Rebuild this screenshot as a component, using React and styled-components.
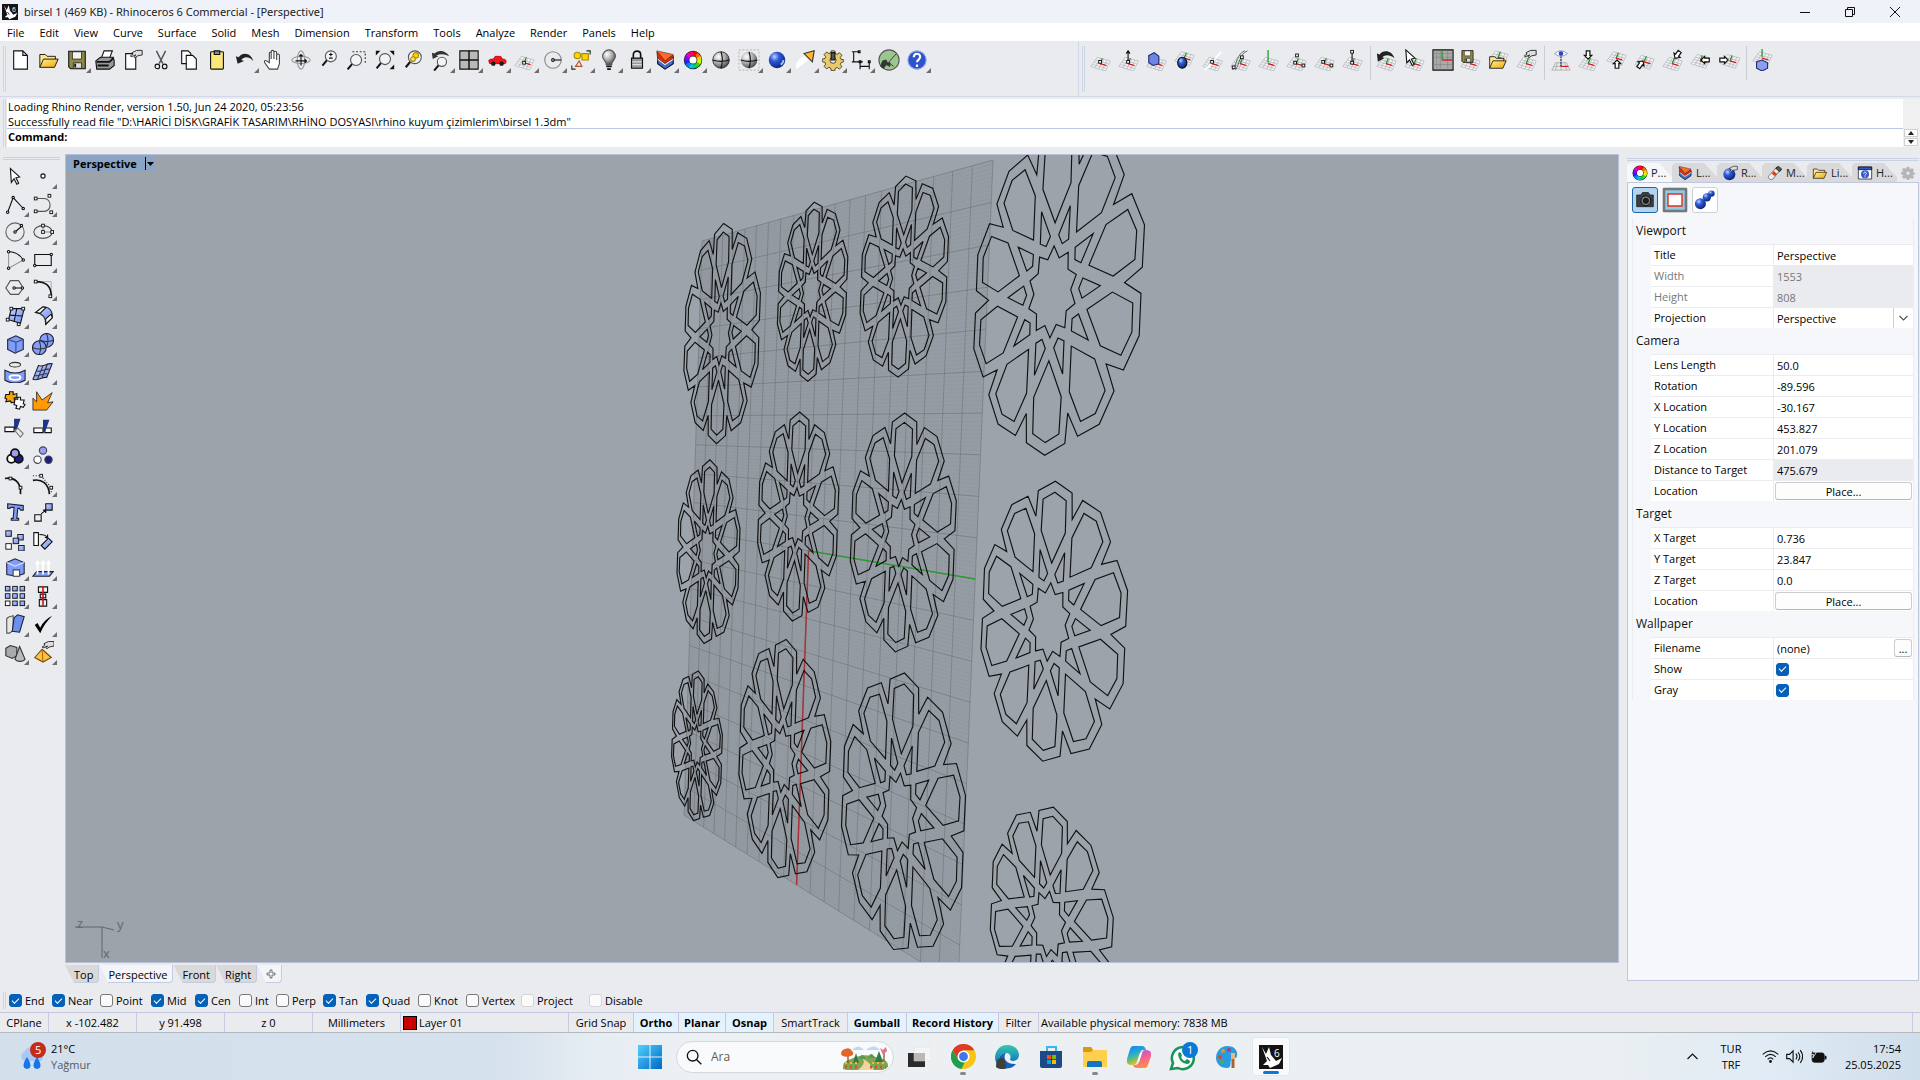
import React from "react";
import styled, { createGlobalStyle, css } from "styled-components";

const Global = createGlobalStyle`
  *, *::before, *::after { box-sizing: border-box; }
  html, body { margin: 0; background: #eaebef; }
  body, button, input, select, textarea {
    font-family: "Open Sans", "Noto Sans", "Liberation Sans", sans-serif;
    font-size: 11px; line-height: 15px; color: #000;
  }
  button { padding: 0; border: 0; background: none; }
`;

/* ---------- shell ---------- */
const Window = styled.div`
  display: flex; flex-direction: column; min-height: 100vh; background: #eaebef;
`;
const TitleBar = styled.header`
  display: flex; align-items: center; gap: 6px; height: 23px; padding: 0 3px 0 2px; background: #eff3f9;
`;
const TitleText = styled.h1`
  margin: 0; flex: 1; font-family: "Noto Sans", "Open Sans", sans-serif; font-size: 11px; font-weight: 400; color: #222;
`;
const WindowControls = styled.div`
  display: flex;
`;
const WindowButton = styled.button`
  width: 45px; height: 22px; display: grid; place-items: center;
`;
const MenuBar = styled.nav`
  display: flex; gap: 15px; height: 18px; padding-left: 7px; background: #fff;
`;
const MenuItem = styled.button`
  line-height: 20px; white-space: nowrap;
`;

/* ---------- toolbars ---------- */
const ToolbarBand = styled.div`
  display: flex; height: 56px; border-bottom: 1px solid #d3d8e6;
`;
const Toolbar = styled.div`
  display: flex; align-items: flex-start; padding: 5px 0 4px 3px;
  flex: ${(p) => (p.$grow ? "1" : "0 0 " + p.$basis)};
  border-right: ${(p) => (p.$grow ? "0" : "1px solid #d3d8e6")};
`;
const Grip = styled.span`
  align-self: stretch; width: 3px; margin-right: ${(p) => p.$space || 0}px;
  border: solid #cdd5e6; border-width: 0 1px;
`;
const ToolButton = styled.button`
  position: relative; flex: none; width: 28px; height: 28px; display: grid; place-items: center;
  svg { display: block; }
  ${(p) => p.$more && css`
    &::after {
      content: ""; position: absolute; right: 0; bottom: 1px;
      border: solid transparent; border-width: 0 0 5px 5px; border-bottom-color: #6d6d70;
    }
  `}
`;
const ToolDivider = styled.span`
  width: 1px; height: 34px; margin: 0 2px 0 3px; background: #c9ccd2;
`;

/* ---------- command area ---------- */
const CommandArea = styled.section`
  display: flex; margin-top: 2px; padding-left: 3px;
`;
const CommandColumn = styled.div`
  flex: 1; background: #fff;
`;
const History = styled.div`
  height: 30px; padding-left: 1px; border-bottom: 1px solid #bcc6e0; line-height: 15px; white-space: pre;
`;
const CommandLine = styled.label`
  display: flex; height: 18px; padding-left: 1px; font-weight: 700; line-height: 16px;
`;
const CommandInput = styled.input`
  flex: 1; border: 0; padding: 0 4px; outline: 0; background: transparent;
`;
const ScrollColumn = styled.div`
  display: flex; flex-direction: column; justify-content: flex-end; width: 17px; background: #f0f0f1;
`;
const Spin = styled.button`
  height: 8px; margin: 0 2px 1px 1px; display: grid; place-items: center;
  background: #fff; border: 1px solid #d0d0d0;
`;

/* ---------- work area ---------- */
const Work = styled.main`
  flex: 1; display: flex; padding: 7px 1px 9px 0;
`;
const SideBar = styled.aside`
  width: 65px; padding: 3px 4px 0 1px;
`;
const SideGrip = styled.div`
  height: 3px; margin: 0 1px 2px 2px; border: solid #c9d2e4; border-width: 1px 0;
`;
const SideGrid = styled.div`
  display: grid; grid-template-columns: 28px 28px;
`;
const ViewColumn = styled.section`
  flex: 1; min-width: 0; display: flex; flex-direction: column;
`;
const Viewport = styled.div`
  position: relative; flex: 1; overflow: hidden; background: #9ca3ab; border: 1px solid #b7c0d8;
  > svg { position: absolute; inset: 0; width: 100%; height: 100%; }
`;
const ViewTitle = styled.button`
  position: absolute; left: 0; top: 0; display: flex; align-items: center; height: 17px; padding-left: 7px;
  background: #8ba5c3; font-weight: 700; font-size: 11px;
`;
const ViewCaret = styled.span`
  display: grid; place-items: center; width: 10px; height: 13px; margin-left: 8px; border-left: 1px solid #000;
`;
const ViewTabs = styled.div`
  display: flex; height: 20px; padding-top: 2px;
`;
const ViewTab = styled.button`
  height: 18px; padding: 0 5px 0 9px; line-height: 20px;
  background: ${(p) => (p.$on ? "#f4f5f9" : "#d9d9da")};
  border: solid #c3cbe0; border-width: 0 1px 1px 0; border-radius: 0 0 4px 0;
  clip-path: polygon(0 0, 100% 0, 100% 100%, 9px 100%);
`;

/* ---------- properties panel ---------- */
const Panel = styled.aside`
  width: 300px; padding: 4px 0 2px 8px; display: flex; flex-direction: column;
`;
const PanelGrip = styled.div`
  height: 3px; border: solid #c9d2e4; border-width: 1px 0;
`;
const PanelTabs = styled.div`
  display: flex; align-items: flex-end; height: 21px;
`;
const PanelTab = styled.button`
  display: flex; align-items: center; gap: 3px; width: 45px; height: 19px; padding-left: 5px;
  background: ${(p) => (p.$on ? "#f6f7fa" : "#d9d9dc")};
  clip-path: polygon(0 3px, 3px 0, 32px 0, 45px 14px, 45px 100%, 0 100%);
  color: #222;
`;
const PanelGear = styled.button`
  flex: 1; height: 19px; display: grid; place-items: center;
`;
const PanelBody = styled.div`
  flex: 1; padding: 4px; background: #f6f7fa; border: 1px solid #c0c8de;
`;
const PageButtons = styled.div`
  display: flex; gap: 4px; height: 31px;
`;
const PageButton = styled.button`
  width: 26px; height: 26px; display: grid; place-items: center; border-radius: 3px;
  border: 1px solid ${(p) => (p.$on ? "#1c66ad" : "#cfd0d4")};
  background: ${(p) => (p.$on ? "#b4d3ee" : "#fff")};
`;
const Group = styled.fieldset`
  margin: 0; padding: 0; border: solid #ececf0; border-width: 0 1px; min-width: 0;
`;
const GroupTitle = styled.h2`
  margin: 0; height: 26px; padding-left: 3px; font-size: 12px; font-weight: 400; line-height: 26px; color: #111;
`;
const Row = styled.div`
  display: grid; grid-template-columns: 122px 1fr; height: 21px; margin-left: 18px; background: #fff;
  border-top: 1px solid #ececf0; color: ${(p) => (p.$off ? "#777" : "#000")};
`;
const RowLabel = styled.label`
  padding-left: 3px; line-height: 20px; white-space: nowrap;
`;
const RowValue = styled.div`
  display: flex; align-items: center; min-width: 0; border-left: 1px solid #ececf0;
  background: ${(p) => (p.$shade ? "#eaebef" : "transparent")};
`;
const ValueInput = styled.input`
  width: 100%; height: 20px; border: 0; padding: 0 3px; outline: 0; background: transparent; color: inherit;
`;
const SelectWrap = styled.div`
  position: relative; flex: 1; height: 20px;
  > svg { position: absolute; right: 5px; top: 7px; pointer-events: none; }
  &::before { content: ""; position: absolute; right: 19px; top: 0; width: 1px; height: 20px; background: #cfcfd3; }
`;
const ValueSelect = styled.select`
  appearance: none; width: 100%; height: 20px; border: 0; padding: 0 3px; background: transparent; outline: 0;
`;
const PushButton = styled.button`
  flex: ${(p) => (p.$small ? "0 0 18px" : "1")}; height: 18px; margin: 0 1px; background: #fdfdfd;
  border: 1px solid #cdcdd1; border-bottom-color: #b5b5ba; border-radius: 3px; line-height: 15px;
`;
const Check = styled.input`
  appearance: none; flex: none; width: 13px; height: 13px; margin: 0 0 0 ${(p) => p.$inset || 0}px; border-radius: 3px;
  border: 1px solid ${(p) => (p.$soft ? "#d4d4d8" : "#77777b")}; background: #fafafb;
  display: grid; place-items: center;
  &:checked { background: #0561b8; border-color: #0561b8; }
  &:checked::after {
    content: ""; width: 7px; height: 4px; margin-top: -2px; border: solid #fff; border-width: 0 0 1px 1px; transform: rotate(-45deg);
  }
`;

/* ---------- bottom bars ---------- */
const SnapBar = styled.div`
  display: flex; align-items: center; height: 20px; padding: 0 0 3px 3px;
`;
const SnapItem = styled.label`
  display: flex; align-items: center; gap: 3px; width: ${(p) => p.$w}px; white-space: nowrap;
`;
const StatusBar = styled.footer`
  display: flex; height: 21px; border-top: 1px solid #c3c8de; border-bottom: 1px solid #b4b9c0; padding-right: 7px;
`;
const StatusCell = styled.button`
  display: flex; align-items: center; justify-content: ${(p) => (p.$left ? "flex-start" : "center")};
  gap: 2px; width: ${(p) => p.$w}px; padding-left: ${(p) => (p.$left ? 2 : 0)}px; white-space: nowrap;
  flex: ${(p) => (p.$fill ? "1" : "none")};
  border-right: 1px solid #c6cae0;
  background: ${(p) => (p.$on ? "#e3f2fc" : "transparent")}; font-weight: ${(p) => (p.$on ? 700 : 400)};
`;
const Swatch = styled.span`
  width: 14px; height: 14px; background: #c80000; border: 1px solid #000;
`;

/* ---------- taskbar ---------- */
const Taskbar = styled.footer`
  display: grid; grid-template-columns: 1fr auto 1fr; align-items: center; height: 47px;
  background: linear-gradient(90deg, #d3e0ec 0, #d5e1ed 26%, #e6edf3 31%, #ecf0f3 36%, #eaeff2 84%, #e0ebf5 92%, #cfdeeb 100%);
`;
const Weather = styled.button`
  justify-self: start; display: flex; align-items: center; gap: 4px; padding-left: 17px; text-align: left; line-height: 16px;
  small { display: block; font-size: 11px; color: #555b63; }
`;
const TaskCenter = styled.div`
  display: flex; align-items: center; height: 47px; padding-right: 2px;
`;
const TaskButton = styled.button`
  position: relative; display: grid; place-items: center; width: 44px; height: 39px;
  &::after {
    content: ""; position: absolute; bottom: 1px; height: 3px; border-radius: 2px;
    width: ${(p) => (p.$state === "active" ? 16 : p.$state === "open" ? 6 : 0)}px;
    background: ${(p) => (p.$state === "active" ? "#0a78d4" : "#85888b")};
  }
  ${(p) => p.$state === "active" && css`
    width: 38px; margin-left: 3px; background: #f8fafc; border-radius: 4px; border: 1px solid #e3e8ec;
  `}
`;
const Search = styled.label`
  display: flex; align-items: center; gap: 9px; width: 218px; height: 32px; padding: 0 4px 0 9px; margin: 0 3px 0 4px;
  background: #f8fafb; border: 1px solid #d3d9de; border-radius: 16px;
  input { flex: 1; min-width: 0; border: 0; background: transparent; outline: 0; padding: 0; font-size: 12px; color: #555; }
  input::placeholder { color: #5a5d60; opacity: 1; }
`;
const Tray = styled.div`
  justify-self: end; display: flex; align-items: center; padding-right: 19px; line-height: 16px;
`;
const TrayItem = styled.button`
  display: flex; align-items: center; justify-content: ${(p) => (p.$end ? "flex-end" : "center")};
  width: ${(p) => p.$w}px; line-height: 16px; text-align: ${(p) => (p.$end ? "right" : "center")};
`;

/* ---------- icons ---------- */
const Svg = ({ s = 24, children, w, h, vb }) => (
  <svg width={w || s} height={h || s} viewBox={vb || "0 0 24 24"} fill="none" stroke="#111" strokeWidth="1.2" aria-hidden="true">
    {children}
  </svg>
);
const Defs = () => (
  <svg width="0" height="0" style={{ display: "block" }} aria-hidden="true">
    <defs>
      <radialGradient id="gBlue" cx=".35" cy=".3" r=".8"><stop offset="0" stopColor="#bcd0ff" /><stop offset=".35" stopColor="#2d5bd8" /><stop offset="1" stopColor="#061a66" /></radialGradient>
      <radialGradient id="gGray" cx=".35" cy=".3" r=".8"><stop offset="0" stopColor="#fff" /><stop offset=".5" stopColor="#aaa" /><stop offset="1" stopColor="#333" /></radialGradient>
      <linearGradient id="gLite" x2="1" y2="1"><stop offset="0" stopColor="#c6d4ff" /><stop offset="1" stopColor="#6c8df2" /></linearGradient>
      <linearGradient id="gFold" x2="1" y2="1"><stop offset="0" stopColor="#ffee9a" /><stop offset="1" stopColor="#f2a900" /></linearGradient>
      <linearGradient id="gWin" x2="1" y2="1"><stop offset="0" stopColor="#4fd0ff" /><stop offset="1" stopColor="#0067c5" /></linearGradient>
      <linearGradient id="gEdge" x2="0" y2="1"><stop offset="0" stopColor="#35c8b0" /><stop offset="1" stopColor="#0c59c0" /></linearGradient>
      <linearGradient id="gCopA" x2=".4" y2="1"><stop offset="0" stopColor="#1a7fe8" /><stop offset=".45" stopColor="#22a8d8" /><stop offset=".75" stopColor="#7cc060" /><stop offset="1" stopColor="#f6c030" /></linearGradient>
      <linearGradient id="gCopB" x2=".3" y2="1"><stop offset="0" stopColor="#a05df0" /><stop offset=".5" stopColor="#f0609a" /><stop offset="1" stopColor="#ff8a4c" /></linearGradient>
    </defs>
  </svg>
);

const HUES = ["#f00", "#f60", "#fc0", "#cf0", "#3d0", "#0c8", "#0cd", "#08f", "#22f", "#80f", "#e0d", "#f06"];
const wheel = (cx, cy, r, w) => (
  <>
    <circle cx={cx} cy={cy} r={r} stroke="#222" strokeWidth={w + 1.6} fill="#fff" />
    {HUES.map((c, i) => {
      const a = (i * Math.PI) / 6 - 1.57;
      const b = a + 0.56;
      return <path key={c} stroke={c} strokeWidth={w} d={`M${cx + r * Math.cos(a)} ${cy + r * Math.sin(a)}A${r} ${r} 0 0 1 ${cx + r * Math.cos(b)} ${cy + r * Math.sin(b)}`} />;
    })}
  </>
);
const lens = (x, y, r = 5) => (
  <>
    <path d={`M${x - r * 0.7} ${y + r * 0.7}l-5 6`} strokeWidth="2.2" />
    <circle cx={x} cy={y} r={r} fill="#f2f4f6" stroke="#555" />
  </>
);
const layersShape = (
  <>
    <path d="M4 9v7l8 6 9-6V9l-9 6z" fill="#3a6fe0" />
    <path d="M4 7v5l8 6 9-6V7l-9 6z" fill="#fff" stroke="#555" strokeWidth=".6" />
    <path d="M3 3l9 9 9-5v3l-9 6-8-6z" fill="#e22b08" strokeWidth=".6" />
    <path d="M3 2l18 4-9 7z" fill="#ff6a2a" strokeWidth=".5" />
  </>
);
const folder = (
  <>
    <path d="M2 20V6h6l2 2h9v3" fill="#ffe68a" strokeWidth="1" />
    <path d="M2 20l4-9h16l-4 9z" fill="url(#gFold)" strokeWidth="1" />
  </>
);
const disk = (
  <>
    <path d="M3 2.500h18v19H5l-2-2z" fill="#8f8a45" />
    <path d="M7 3h10v8H7z" fill="#f4f4ee" strokeWidth=".8" />
    <path d="M8 15h9v6H8z" fill="#ddd" strokeWidth=".8" />
    <path d="M10 16v4" strokeWidth="2" />
  </>
);
const hand2 = <path d="M11 4l5-2.500h6v5l-5 1-3 2-1-1 2-2-5 2-1-1 3-2z" fill="#ddd" strokeWidth=".9" />;
const ball = (x, y, r, f = "url(#gBlue)") => <circle cx={x} cy={y} r={r} fill={f} stroke="none" />;
const sq = (x, y, f = "#fff", s = 3) => <rect key={`${x}-${y}`} x={x - s / 2} y={y - s / 2} width={s} height={s} fill={f} strokeWidth="1" />;
const undo = <path d="M2 8l2 8 7-3-3-1c3-4 8-4 13 1-2-8-11-11-16-4z" fill="#222" stroke="none" />;
const gear = (c, s) => (
  <path d="M10 2h4l.5 3 2 .8 2.500-1.800 2.800 2.800L20 9.300l.8 2 3 .5v2l-3 1-.8 2 1.800 2.500-2.800 2.600-2.500-1.700-2 .8-.5 2.600h-4l-.5-2.800-2-.8L5 21.700l-2.700-2.800L4 16.500l-.8-2-3-.5v-3l3-.6.8-2L2.300 6 5 3.300 7.500 5l2-.8zM12 9a3.300 3.300 0 100 6.600A3.300 3.300 0 0012 9z" fill={c} fillRule="evenodd" stroke={s} strokeWidth=".9" />
);

/* small construction plane shared by the whole CPlane toolbar */
const Plane = ({ x = 0, y = 0, up }) => (
  <g transform={`translate(${x} ${y})`}>
    <path stroke="#a9abb0" strokeWidth=".7" fill="#f3f3f5" d="M8 9l14 4-5 11-16-5zM11.500 10l-6 10M15 11l-5.500 11M18.500 12l-5 11M6 12l14 4M4.500 14.500l14 4M3 17l14.500 4" />
    <path stroke="#17951c" strokeWidth="1.300" d={up ? "M11 15V1" : "M11 16l2.500-6"} />
    <path stroke="#d21414" strokeWidth="1.400" d="M11 16l7 2" />
  </g>
);

const MAIN = [
  ["New", 0, <path d="M4 2h10l5 5v15H4zM14 2v5h5" fill="#fff" />],
  ["Open", 0, folder],
  ["Save", 1, disk],
  ["Print", 0, <><path d="M8 10l3-8h9l-3 8" fill="#fff" /><path d="M2 13l5-4h14l1 4v5l-5 4H3z" fill="#999" /><path d="M3 14h14l4-4M4 18h12" strokeWidth="2" /></>],
  ["Properties", 0, <><path d="M4 5h11v17H4z" fill="#fff" />{hand2}</>],
  ["Cut", 0, <><path d="M7 2l7 14M17 2l-7 14" stroke="#555" strokeWidth="1.600" /><circle cx="8" cy="19" r="2.500" /><circle cx="16" cy="19" r="2.500" /></>],
  ["Copy", 0, <><path d="M4 2h7l3 3v11H4z" fill="#fff" /><path d="M9 7h7l4 4v11H9z" fill="#fff" /></>],
  ["Paste", 0, <><rect x="5" y="3" width="14" height="19" rx="1" fill="#fbe67a" /><path d="M9 2h6v4H9z" fill="#888" /></>],
  ["Undo", 1, undo],
  ["Pan", 0, <path d="M8 22l-5-7c-1-2 0-3 2-2l3 2V5c0-2 2-2 2 0v6-8c0-2 3-2 3 0v8-7c0-2 3-2 3 0v8-5c0-2 3-2 3 0v9l-2 6z" fill="#fff" stroke="#444" />],
  ["Rotate view", 0, <><ellipse cx="12" cy="12" rx="10" ry="4" stroke="#999" /><ellipse cx="12" cy="12" rx="4" ry="10" stroke="#999" /><path d="M12 6v12M6 13h12M10 8l2-2 2 2M16 11l2 2-2 2" strokeWidth="1.200" /></>],
  ["Zoom dynamic", 0, <>{lens(14, 8, 6)}<path d="M12 6h4M14 4v4M12 10h4" /></>],
  ["Zoom window", 0, <><path d="M7 3h14v13" stroke="#333" strokeDasharray="2 2" />{lens(11, 12, 6)}</>],
  ["Zoom extents", 0, <>{lens(12, 11, 6)}<path d="M2 2h5l-5 5zM22 2h-5l5 5zM22 22h-5l5-5z" fill="#111" stroke="none" /></>],
  ["Zoom selected", 0, <>{lens(14, 9, 7)}<circle cx="15" cy="7" r="3" fill="#ffd500" stroke="#a80" /><circle cx="12" cy="11" r="2.500" fill="#ffe95c" stroke="#a80" /></>],
  ["Undo view", 1, <>{lens(13, 14, 5)}<path d="M2 4l1 7 6-3-2-1c4-2 9-2 14 1C18 2 9 0 5 5z" fill="#333" stroke="none" /></>],
  ["4 View", 1, <><path d="M2 2h20v20H2z" fill="#b9b9b9" /><path d="M12 2v20M2 12h20" strokeWidth="1.600" /></>],
  ["Car", 1, <><path d="M3 13c0-2 3-2 5-2l2-3h6l2 3c3 0 4 1 4 3l-1 2H4z" fill="#f01818" stroke="#a00" strokeWidth=".8" /><circle cx="8" cy="16" r="1.800" fill="#222" /><circle cx="17" cy="16" r="1.800" fill="#222" /></>],
  ["Set CPlane", 1, <><Plane y={-1} />{sq(11, 15)}</>],
  ["Circle", 1, <><circle cx="12" cy="12" r="9" stroke="#888" /><path d="M12 12h9" /><circle cx="12" cy="12" r="1.500" fill="#fff" /></>],
  ["Object snap", 1, <><circle cx="8" cy="7" r="3.500" fill="#ffd500" stroke="#a80" /><path d="M13 5h7v7h-7z" fill="#ffd500" stroke="#a80" /><path d="M6 19l4-6 3 6z" stroke="#b5552d" /><path d="M18 2h4v4M2 18v4h4" stroke="#222" /></>],
  ["Light", 1, <><path d="M9 17c0-4-4-5-4-9a7 7 0 0114 0c0 4-4 5-4 9z" fill="url(#gGray)" stroke="#555" /><path d="M9 19h6M10 22h4" strokeWidth="2" /></>],
  ["Lock", 1, <><path d="M8 11V6c0-5 8-5 8 0v5" strokeWidth="1.800" /><path d="M6 10h12v11H6z" fill="#999" /><path d="M7 14h10M7 17h10" stroke="#ddd" /></>],
  ["Layers", 1, layersShape],
  ["Materials", 1, wheel(12, 12, 7, 4.5)],
  ["Shade", 0, <>{ball(12, 12, 9, "url(#gGray)")}<circle cx="12" cy="12" r="9" strokeWidth=".8" /><path d="M3 12c6 2 12 2 18 0M12 3c2 6 2 12 0 18" /></>],
  ["Render", 1, <><path d="M1 1h22v22H1z" stroke="#bbb" strokeDasharray="2 2" />{ball(12, 12, 9, "url(#gGray)")}<path d="M3 12c6 2 12 2 18 0M12 3c2 6 2 12 0 18" /></>],
  ["Render ball", 1, <>{ball(12, 12, 9)}<path d="M16 17c2-1 3-3 3-5" stroke="#9fc3ff" strokeWidth="2" /></>],
  ["Spotlight", 1, <><path d="M2 22c0-8 4-12 10-14l4 4z" fill="#fff" stroke="none" /><path d="M11 5l11-3-2 12z" fill="#ffb52e" stroke="#333" /></>],
  ["Options", 1, <>{gear("#e9c96b", "#3a3010")}<path d="M10 4h4v8h-4z" fill="#555" /></>],
  ["Dimension", 1, <path d="M2 3h8M2 14h8M4 3v11M10 14h4M11 22v-8M21 22v-8M11 19h10M9 2h2v2H9zM10 13h2v2h-2zM20 13h2v2h-2z" />],
  ["Grasshopper", 0, <><circle cx="12" cy="12" r="11" fill="#9cc690" stroke="#555" /><path d="M3 19l2-6 4-1 1 3 3 0 0 4-4-2-3 4zM12 14l8-9M12 15l5 4" fill="#333" stroke="#333" strokeWidth="1" /></>],
  ["Help", 1, <><circle cx="12" cy="12" r="10" fill="#2d52cc" stroke="#8ea6ea" /><path d="M8.500 9c0-5 7-5 7-.5 0 3-3.500 3-3.500 6M12 17v2.500" stroke="#fff" strokeWidth="2.400" /></>],
];

const arrow = (x, y, r) => <path transform={`translate(${x} ${y}) rotate(${r})`} d="M0 5l-4-4h2v-5h4v5h2z" fill="#fff" strokeWidth="1.300" />;
const CPLANE = [
  ["CPlane origin", <><Plane />{sq(11, 14)}</>],
  ["CPlane elevation", <><Plane /><path d="M11 14V3M9 5l2-3 2 3" />{sq(11, 14)}</>],
  ["CPlane to object", <><Plane /><path d="M3 7l6-3 5 4v8l-6 2-5-3z" fill="#6c86e6" stroke="#222b66" /></>],
  ["CPlane to surface", <><Plane y={-6} /><ellipse cx="9" cy="15" rx="5" ry="6" fill="url(#gBlue)" /></>],
  ["CPlane perpendicular", <><Plane /><path d="M3 23c5-4 9-10 18-20" stroke="#fff" strokeWidth="2" />{sq(11, 14)}</>],
  ["CPlane to curve", <><Plane /><path d="M3 23c4-6 5-18 13-21M6 23c4-6 5-18 13-21" stroke="#333" strokeWidth=".8" />{sq(13, 9)}{sq(4, 20)}</>],
  ["CPlane rotate", <Plane up />],
  ["CPlane 3 points", <><Plane />{sq(12, 7)}{sq(10, 15)}{sq(19, 18)}</>],
  ["CPlane X", <><Plane />{sq(10, 14)}{sq(19, 18)}</>],
  ["CPlane Z", <><Plane /><path d="M11 15V3" />{sq(11, 3)}{sq(11, 15)}</>],
  null,
  ["Previous CPlane", <><Plane /><path d="M1 5l1 9 7-4-2-1c3-3 8-3 13 1C18 2 8 0 4 6z" fill="#222" stroke="none" /></>],
  ["Select CPlane", <><Plane /><path d="M2 1l1 14 3-3 3 6 2-1-3-6 4-1z" fill="#fff" /></>],
  ["CPlane top", <><path d="M1 1h22v22H1z" fill="#aaa" /><path d="M1 5h22M1 9h22M1 17h22M5 1v22M9 1v22M17 1v22" stroke="#777" strokeWidth=".5" /><path d="M11 1v11" stroke="#17951c" /><path d="M11 12h11" stroke="#d21414" strokeWidth="1.400" /></>],
  ["Save CPlane", <><Plane /><g transform="scale(.68)">{disk}</g></>],
  ["Read CPlane", <><Plane y={-7} /><g transform="translate(0 3) scale(.9)">{folder}</g></>],
  ["Edit CPlane", <><Plane />{hand2}</>],
  null,
  ["View CPlane", <><path d="M6 15h12l4 8H2zM4 19h16M12 15v8M8 15l-2 8M16 15l2 8" stroke="#999" strokeWidth=".7" /><path d="M12 8v11" strokeDasharray="2 1" /><path d="M5 5q7-6 14 0-7 6-14 0z" fill="#fff" stroke="#6a78b0" strokeWidth=".8" /><circle cx="12" cy="5" r="2.500" fill="#2946c8" stroke="none" /><path d="M12 19h8" stroke="#d21414" /></>],
  ["World top", <><Plane />{arrow(11, 6, 0)}</>],
  ["World bottom", <><Plane y={-6} />{arrow(12, 17, 180)}</>],
  ["World left", <><Plane y={-2} />{arrow(7, 17, 215)}</>],
  ["World right", <><Plane />{arrow(17, 6, 35)}</>],
  ["World front", <><Plane y={-3} />{arrow(17, 12, 90)}</>],
  ["World back", <><Plane x={2} y={-3} />{arrow(6, 12, 270)}</>],
  null,
  ["Named CPlane", <><Plane y={-6} up /><path d="M5 14l6-2 6 3v6l-6 3-6-3z" fill="#8a9df0" stroke="#222b66" /></>],
];

const dot = (x, y) => <circle key={`${x}.${y}`} cx={x} cy={y} r="1.300" fill="#fff" />;
const L = "url(#gLite)";
const SIDE = [
  ["Select", 0, <path d="M7 4l1 15 3-4 3 6 2-1-3-6 4-1z" fill="#fff" />],
  ["Point", 1, <circle cx="12" cy="12" r="2.300" fill="#fff" />],
  ["Polyline", 1, <><path d="M4 21L10 5l12 13" />{dot(4, 21)}{dot(10, 5)}{dot(21, 17)}</>],
  ["Curve", 1, <><path d="M4 6h9c9 0 9 14 0 14H4" stroke="#555" />{sq(4, 6)}{sq(4, 20)}{sq(19, 3)}{sq(21, 21)}</>],
  ["Circle", 1, <><circle cx="12" cy="12" r="10" stroke="#666" /><path d="M12 12l7-6" />{dot(12, 12)}{dot(19, 5)}</>],
  ["Ellipse", 1, <><ellipse cx="12" cy="12" rx="10" ry="7" stroke="#555" /><path d="M12 12V5M12 12h10" stroke="#888" />{sq(12, 12)}{sq(12, 5)}{sq(22, 12)}</>],
  ["Arc", 1, <><path d="M5 21V3" stroke="#999" /><path d="M5 21l16-9" stroke="#999" /><path d="M5 3c8 0 13 4 16 9" />{dot(5, 3)}{dot(5, 21)}{dot(21, 12)}</>],
  ["Rectangle", 1, <><path d="M3 6h18v12H3z" />{dot(3, 18)}{dot(21, 6)}</>],
  ["Polygon", 1, <><path d="M7 4h9l5 8-5 7H7l-5-7z" stroke="#555" /><path d="M11 12h9" />{dot(11, 12)}{dot(20, 12)}</>],
  ["Fillet", 1, <><path d="M4 5h17v16" stroke="#999" strokeWidth=".8" /><path d="M4 5c11 0 17 4 17 16" strokeWidth="1.800" />{sq(4, 5)}{sq(20, 21)}</>],
  ["Surface", 1, <><path d="M8 4h14l-4 16-13-4z" fill={L} /><path d="M14 4l-3 14M6 11l14 1" />{sq(8, 4)}{sq(21, 4)}{sq(4, 16)}{sq(16, 21)}</>],
  ["Revolve", 1, <><path d="M4 8l8-6c8 0 11 6 10 12l-7 7c0-7-4-12-11-13z" fill={L} stroke="#333" /><path d="M4 8l8-6 3 1-6 6zM15 21l7-7-1-4-6 5z" fill="#fff" /></>],
  ["Box", 1, <><path d="M4 7l9-4 8 4v11l-9 4-8-4z" fill="#7f9cf8" stroke="#223" /><path d="M4 7l9 3v12M13 10l8-3" stroke="#334a9c" /></>],
  ["Sphere", 1, <><circle cx="16" cy="8" r="7.500" fill="#84a0f6" stroke="#223" /><path d="M9 8c5 2 9 2 14 0M16 1c2 5 2 9 0 14" stroke="#334" /><circle cx="8" cy="16" r="7.500" fill="#84a0f6" stroke="#223" /><path d="M1 16c5 2 9 2 14 0M8 9c2 5 2 9 0 14" stroke="#334" /></>],
  ["Project curve", 1, <><ellipse cx="12" cy="4" rx="6" ry="2.500" stroke="#333" /><path d="M1 10c7 4 15 4 22 0v11c-7 4-15 4-22 0z" fill="#7f9cf8" stroke="#223" /><ellipse cx="12" cy="18" rx="6" ry="2.500" stroke="#fff" strokeWidth="2" /></>],
  ["Mesh", 1, <><path d="M7 5c5 2 9-3 15-2l-6 15c-5-1-9 4-15 2z" fill={L} stroke="#223" /><path d="M5 11c5 1 9-3 14-2M3 16c5 1 9-3 14-2M12 5L6 20M17 3l-6 15" stroke="#334" /></>],
  ["Join", 0, <><path d="M2 6l4 0 0-3 4 0 0 3 4-1 0 4-3 1 1 4-4 1-1-2-5 1 1-3-2-1z" fill="#f8a400" /><path d="M12 11l3 0 0-2 3 0 0 3 4 0-1 4 2 1-2 3-3-1-1 3-4-1 1-3-3-1z" fill="#fff" /></>],
  ["Explode", 0, <path d="M1 23V10l4 4V3l6 9 11-8-5 11 6-1-7 9z" fill="#ff9a00" strokeWidth=".8" />],
  ["Trim", 0, <><path d="M11 2h7l-4 12h-3z" fill="#1d3588" stroke="none" /><path d="M1 11h10v5H1z" fill="#fff" /><path d="M12 15l3-3 6 6-3 4z" stroke="#777" /></>],
  ["Split", 0, <><path d="M2 12h10v5H2zM14 12h7v5h-7z" fill="#fff" /><path d="M12 3h7l-5 14h-2z" fill="#1d3588" stroke="none" /></>],
  ["Group", 1, <><circle cx="8" cy="15" r="4.500" fill="#fff" strokeWidth="2" /><circle cx="16" cy="15" r="4.500" fill="#1d1d80" strokeWidth="2" /><circle cx="12" cy="9" r="4.500" fill="#9d9df0" strokeWidth="2" /></>],
  ["Ungroup", 0, <><circle cx="12" cy="6" r="4" fill="#9d9df0" stroke="#445" /><circle cx="6" cy="16" r="4" fill="#fff" stroke="#445" /><circle cx="18" cy="16" r="4" fill="#1d1d80" stroke="#445" /></>],
  ["Edit points", 0, <><path d="M1 6c10-2 18 4 17 17" strokeWidth="1.800" />{sq(7, 6)}{sq(18, 16)}</>],
  ["Control points", 1, <><path d="M1 8c10-2 17 4 18 15" strokeWidth="1.800" /><path d="M1 3h9l11 13v7" strokeDasharray="1 2" />{sq(10, 3)}{sq(21, 16)}</>],
  ["Text", 1, <path d="M4 3l17 2v5h-3l-1-2h-2l-1 11h2v2H8v-2h2l1-12H8L6 8H4z" fill="#7f9cf8" stroke="#223" />],
  ["Move", 1, <><path d="M3 15h7v7H3z" fill="#eee" /><path d="M15 3h7v7h-7z" fill={L} /><path d="M10 14l5-4M12 10h3v3" /></>],
  ["Copy objects", 0, <>{[[5, 5], [18, 9], [13, 13], [19, 21]].map(([x, y]) => sq(x, y, L, 6))}{sq(5, 19, "#fff", 6)}</>],
  ["Rotate", 0, <><path d="M2 4h5v14H2z" fill="#fff" /><path d="M8 6c5 0 8 1 9 4M14 9l3 1V6" /><path d="M10 18l8-8 4 4-8 8z" fill={L} /></>],
  ["Boolean", 1, <><path d="M3 6l9-4 10 4v12l-8 3-11-2z" fill="#7f9cf8" stroke="#223" /><path d="M3 6l9 4 10-4" stroke="#dfe6ff" /><path d="M10 14h7v7h-7z" fill="#fff" stroke="#445" /></>],
  ["Extrude", 1, <><path d="M5 16h18l-4 5H1z" fill="#7f9cf8" stroke="#223" /><path d="M6 19V5M12 19V5M18 19V5M4 8l2-3 2 3M10 8l2-3 2 3M16 8l2-3 2 3" stroke="#fff" strokeWidth="2" /></>],
  ["Array", 1, <>{[4, 12, 20].map((x) => [4, 12, 20].map((y) => sq(x, y, x === 4 && y === 20 ? "#fff" : L, 5)))}</>],
  ["Align", 1, <><path d="M7 2h10v6H7zM9 10h6v4H9zM8 16h8v7H8z" fill="#eee" /><path d="M12 1v22" stroke="#d01818" strokeWidth="1.800" /></>],
  ["Bend", 1, <><path d="M3 6c3-3 5-2 7-3v16l-4 3H3z" fill="#e6e6e6" stroke="#555" /><path d="M11 5l4-3 7 2-5 17-8-1z" fill="#6d8ff0" stroke="#223" /></>],
  ["Check", 1, <path d="M3 13l3-2 3 5C12 10 16 6 22 3 16 9 12 15 9 22z" fill="#000" stroke="none" />],
  ["Solids", 1, <><path d="M2 8l5-3 7 2v9l-5 3-7-3z" fill="#aaa" stroke="#333" /><path d="M17 6l6 14c-3 3-8 3-11 0z" fill="#bbb" stroke="#333" /></>],
  ["Pyramid", 1, <><path d="M11 9l10 9-9 5-9-5z" fill="#ffc04a" stroke="#744a00" /><path d="M11 9l1 14" stroke="#a86c00" /><g transform="translate(2 -1)">{hand2}</g></>],
];

const RhinoLogo = ({ s }) => (
  <Svg s={s}>
    <path d="M0 0h24v24H0z" fill="#141414" stroke="none" />
    <path d="M3 2l4 7 3-7 2 8 5 6 6-3-3 6-9 4-2-3-5 0 4-4z" fill="#fff" stroke="none" />
    <path d="M3 15l3 2M8 12l3 4" stroke="#141414" />
    <text x="15" y="12" fontSize="10" fill="#fff" stroke="none">6</text>
  </Svg>
);

/* ---------- perspective scene ---------- */
const QUAD = [[702, 241], [993, 160], [958, 985], [684, 815]];

function squareToQuad([[x0, y0], [x1, y1], [x2, y2], [x3, y3]]) {
  const dx1 = x1 - x2, dx2 = x3 - x2, sx = x0 - x1 + x2 - x3;
  const dy1 = y1 - y2, dy2 = y3 - y2, sy = y0 - y1 + y2 - y3;
  const det = dx1 * dy2 - dx2 * dy1;
  const g = (sx * dy2 - dx2 * sy) / det;
  const h = (dx1 * sy - sx * dy1) / det;
  return [x1 - x0 + g * x1, x3 - x0 + h * x3, x0, y1 - y0 + g * y1, y3 - y0 + h * y3, y0, g, h, 1];
}
function invert([a, b, c, d, e, f, g, h, i]) {
  return [e * i - f * h, c * h - b * i, b * f - c * e, f * g - d * i, a * i - c * g, c * d - a * f, d * h - e * g, b * g - a * h, a * e - b * d];
}
const apply = (m, x, y) => {
  const w = m[6] * x + m[7] * y + m[8];
  return [(m[0] * x + m[1] * y + m[2]) / w, (m[3] * x + m[4] * y + m[5]) / w];
};
const TO_SCREEN = squareToQuad(QUAD);
const TO_PLANE = invert(TO_SCREEN);

/* each medallion: star centre on screen, then its top and bottom tips */
const MEDALLIONS = [
  [720, 334, 723, 224, 716, 444],
  [811, 292, 814, 202, 808, 381],
  [902, 277, 906, 176, 898, 377],
  [1052, 292, 1061, 127, 1045, 456],
  [707, 552, 710, 460, 705, 644],
  [796, 517, 799, 414, 793, 623],
  [900, 533, 905, 413, 896, 652],
  [1049, 622, 1055, 482, 1043, 762],
  [696, 746, 698, 670, 694, 820],
  [782, 759, 785, 639, 777, 877],
  [899, 812, 903, 675, 892, 951],
  [1048, 924, 1053, 808, 1043, 1041],
];

const polar = (r, deg) => {
  const a = (deg * Math.PI) / 180;
  return [r * Math.sin(a), r * Math.cos(a)];
};
const SHAPES = (() => {
  const outline = [], star = [], closed = [];
  for (let k = 0; k < 10; k++) {
    const a = k * 36;
    outline.push(polar(0.952, a - 13.6), polar(1, a), polar(0.952, a + 13.6), polar(0.78, a + 18));
    star.push(polar(0.28, a), polar(0.212, a + 18));
    closed.push([polar(0.922, a), polar(0.881, a + 10), polar(0.662, a + 14), polar(0.42, a), polar(0.662, a - 14), polar(0.881, a - 10)]);
    closed.push([polar(0.3, a + 18), polar(0.346, a + 28), polar(0.531, a + 18), polar(0.346, a + 8)]);
  }
  return [outline, star, ...closed];
})();

const fx = (n) => n.toFixed(1);
const toPath = (pts) => "M" + pts.map((p) => p.map(fx).join(" ")).join("L") + "Z";

function medallionPath([cx, cy, tx, ty, bx, by]) {
  const [u, v] = apply(TO_PLANE, cx, cy);
  const t = apply(TO_PLANE, tx, ty);
  const b = apply(TO_PLANE, bx, by);
  const r = Math.hypot(b[0] - t[0], b[1] - t[1]) / 2;
  return SHAPES.map((s) => toPath(s.map(([x, y]) => apply(TO_SCREEN, u + x * r, v + y * r)))).join("");
}
const seg = (x0, y0, x1, y1) =>
  "M" + apply(TO_SCREEN, x0, y0).map(fx).join(" ") + "L" + apply(TO_SCREEN, x1, y1).map(fx).join(" ");
const gridPath = (n) =>
  Array.from({ length: n + 1 }, (_, i) => seg(i / n, 0, i / n, 1) + seg(0, i / n, 1, i / n)).join("");

const Scene = () => (
  <svg viewBox="66 155 1552 807" preserveAspectRatio="xMidYMid slice" fill="none" role="img" aria-label="Perspective view">
    <path d={toPath(QUAD)} fill="#555c66" fillOpacity=".06" />
    <path d={gridPath(200)} stroke="#5e656e" strokeOpacity=".1" strokeWidth=".6" />
    <path d={gridPath(20)} stroke="#5a5d62" strokeOpacity=".36" strokeWidth="1" />
    <path d={seg(0.5, 0.5, 1, 0.5)} stroke="#2f9a35" strokeWidth="1.500" />
    <path d={seg(0.5, 0.5, 0.5, 1)} stroke="#a83238" strokeWidth="1.500" />
    <g stroke="#111" strokeWidth="1.150">
      {MEDALLIONS.map((m, i) => <path key={i} d={medallionPath(m)} />)}
    </g>
    <path d="M75 927h27l12 3M102 927v31" stroke="#63676d" />
    <g fill="#63676d" fontSize="13">
      <text x="77" y="928">z</text><text x="117" y="929">y</text><text x="103" y="958">x</text>
    </g>
  </svg>
);

/* ---------- data ---------- */
const MENUS = ["File", "Edit", "View", "Curve", "Surface", "Solid", "Mesh", "Dimension", "Transform", "Tools", "Analyze", "Render", "Panels", "Help"];
const GROUPS = [
  ["Viewport", [["Title", "Perspective"], ["Width", "1553", "off"], ["Height", "808", "off"], ["Projection", "Perspective", "select"]]],
  ["Camera", [["Lens Length", "50.0"], ["Rotation", "-89.596"], ["X Location", "-30.167"], ["Y Location", "453.827"], ["Z Location", "201.079"], ["Distance to Target", "475.679", "shade"], ["Location", "Place...", "button"]]],
  ["Target", [["X Target", "0.736"], ["Y Target", "23.847"], ["Z Target", "0.0"], ["Location", "Place...", "button"]]],
  ["Wallpaper", [["Filename", "(none)", "file"], ["Show", "", "check"], ["Gray", "", "check"]]],
];
const PANEL_TABS = [
  ["P...", wheel(12, 12, 8, 5)],
  ["L...", layersShape],
  ["R...", <>{ball(11, 14, 9)}<path d="M11 5l6-3h6v5l-7 1-3 3-1-1 2-3z" fill="#ddd" strokeWidth=".9" /></>],
  ["M...", <><path d="M3 16L15 3l5 4L9 21c-4 3-9-2-6-5z" fill="#eee" stroke="#666" /><path d="M13 5l6 5 3-4-5-4z" fill="#555" /><path d="M10 9l5 4-3 4-5-4z" fill="#e0401a" stroke="none" /></>],
  ["Li...", folder],
  ["H...", <><path d="M2 3h20v18H2z" fill="#fff" stroke="#224" /><path d="M2 3h20v4H2z" fill="#2f55c8" /><circle cx="12" cy="14" r="6" fill="#3458cc" stroke="none" /><path d="M10 13c0-3 4-3 4 0 0 1-2 1-2 3M12 17v1.500" stroke="#fff" strokeWidth="1.500" /></>],
];
const SNAPS = [["End", 1, 43], ["Near", 1, 48], ["Point", 0, 51], ["Mid", 1, 44], ["Cen", 1, 44], ["Int", 0, 37], ["Perp", 0, 47], ["Tan", 1, 43], ["Quad", 1, 52], ["Knot", 0, 48], ["Vertex", 0, 55], ["Project", 0, 68, 1], ["Disable", 0, 60, 1]];
const STATUS = [["CPlane", 49], ["x -102.482", 88], ["y 91.498", 88], ["z 0", 88], ["Millimeters", 88], ["Layer 01", 168, "layer"], ["Grid Snap", 65], ["Ortho", 45, "on"], ["Planar", 47, "on"], ["Osnap", 48, "on"], ["SmartTrack", 74], ["Gumball", 59, "on"], ["Record History", 92, "on"], ["Filter", 40]];

const Value = ({ id, kind, value }) => {
  if (kind === "select")
    return (
      <SelectWrap>
        <ValueSelect id={id} defaultValue={value}><option>{value}</option></ValueSelect>
        <Svg w={9} h={6} vb="0 0 9 6"><path d="M.5 1l4 4 4-4" stroke="#555" /></Svg>
      </SelectWrap>
    );
  if (kind === "button") return <PushButton id={id}>{value}</PushButton>;
  if (kind === "check") return <Check id={id} type="checkbox" defaultChecked $inset={2} />;
  if (kind === "file") return <><ValueInput id={id} defaultValue={value} /><PushButton $small aria-label="Browse">...</PushButton></>;
  return <ValueInput id={id} defaultValue={value} disabled={kind === "off"} readOnly={kind === "shade"} />;
};

const TASKS = [
  ["Task view", "", <Svg s={24}><path d="M1 8h17v14H1z" fill="#2b2b2b" stroke="none" /><path d="M7 2h17v14H7z" fill="#f4f4f4" stroke="#ddd" strokeWidth=".5" /><path d="M7 8h11v8H7z" fill="#b9b9b9" stroke="none" /></Svg>],
  ["Chrome", "open", <Svg s={25}><circle cx="12" cy="12" r="12" fill="#f7c518" stroke="none" /><path d="M1.600 6A12 12 0 0122.400 6H12l-5 9z" fill="#dd3a2c" stroke="none" /><path d="M1.600 6l5.400 9 6 3-3 6A12 12 0 011.600 6z" fill="#1f9d50" stroke="none" /><circle cx="12" cy="12" r="5" fill="#3a78e8" stroke="#fff" strokeWidth="1.500" /></Svg>],
  ["Edge", "", <Svg s={24}><path d="M0 12C1 4 6 0 12 0c8 0 12 5 12 10 0 4-3 6-6 6-2 0-3-1-3-2 1-1 1-6-4-6-4 0-7 3-7 7 0 5 5 9 10 9C6 25 0 20 0 12z" fill="url(#gEdge)" stroke="none" /><path d="M4 15c0-5 4-7 7-7-3 3-2 12 10 11-5 7-17 5-17-4z" fill="#1461b8" stroke="none" /><path d="M1 22c0-4 1-9 5-9s5 5 5 10c-3 2-8 1-10-1z" fill="#3f403c" stroke="none" /></Svg>],
  ["Store", "", <Svg s={24}><path d="M1 6h22v15q0 2-2 2H3q-2 0-2-2z" fill="#1b4a86" stroke="none" /><path d="M8 6V2h9v4" stroke="#38b8ee" strokeWidth="2" /><path d="M8 10h4v4H8z" fill="#f25022" stroke="none" /><path d="M13 10h4v4h-4z" fill="#7fba00" stroke="none" /><path d="M8 15h4v4H8z" fill="#00a4ef" stroke="none" /><path d="M13 15h4v4h-4z" fill="#ffb900" stroke="none" /></Svg>],
  ["Explorer", "open", <Svg s={24}><path d="M0 2h8l2 3h14v17H0z" fill="#ffd050" stroke="none" /><path d="M0 2h8l2 3-2 2H0z" fill="#d99a06" stroke="none" /><path d="M4 22v-4q0-2 2-2h11q2 0 2 2v4z" fill="#1274c4" stroke="none" /></Svg>],
  ["Copilot", "", <Svg s={24}><path d="M6 1h9q3 0 4 4h-3q-2 0-3 3l-3 9q-1 3-4 3H4q-5 0-4-6l3-10q1-3 3-3z" fill="url(#gCopA)" stroke="none" /><path d="M18 5h1q6 0 5 6l-3 9q-1 3-4 3H10q-3 0-4-3h2q3 0 4-3l3-9q1-3 3-3z" fill="url(#gCopB)" stroke="none" /><path d="M13 8h2l-3 9h-2z" fill="#f4f7f9" stroke="none" /></Svg>],
  ["WhatsApp", "", <Svg w={30} h={30} vb="0 0 30 30"><path d="M3 27l2-6a11 11 0 115 5z" fill="#f6fbf8" stroke="#19935a" strokeWidth="2.500" /><path d="M10 12q1-3 3-1l1 3-1 1q1 3 4 4l2-2 3 2q0 3-3 3-8-1-9-10z" fill="#19935a" stroke="none" /><circle cx="22" cy="8" r="8" fill="#0a78d4" stroke="none" /><text x="19" y="12" fontSize="11" fill="#fff" stroke="none">1</text></Svg>],
  ["Paint", "", <Svg s={24}><path d="M12 1c8 0 11 5 10 10-1 4-5 2-6 4s1 8-4 8C5 23 1 18 1 13 1 6 6 1 12 1z" fill="#2b9be0" stroke="none" /><circle cx="5" cy="12" r="2" fill="#e0452c" stroke="none" /><circle cx="8" cy="6" r="2" fill="#c9a227" stroke="none" /><circle cx="14" cy="5" r="2" fill="#b43a80" stroke="none" /><circle cx="7" cy="17" r="2" fill="#4caf50" stroke="none" /><path d="M18 14v9" stroke="#a8632c" strokeWidth="3" /><path d="M18 8v6" stroke="#e8b878" strokeWidth="4" /></Svg>],
  ["Rhinoceros", "active", <RhinoLogo s={24} />],
];

export default function App() {
  return (
    <Window>
      <Global />
      <Defs />
      <TitleBar>
        <RhinoLogo s={16} />
        <TitleText>birsel 1 (469 KB) - Rhinoceros 6 Commercial - [Perspective]</TitleText>
        <WindowControls>
          <WindowButton aria-label="Minimize"><Svg s={10} vb="0 0 10 10"><path d="M0 5.500h10" strokeWidth="1" /></Svg></WindowButton>
          <WindowButton aria-label="Restore"><Svg s={10} vb="0 0 10 10"><path d="M.5 2.500h7v7h-7zM2.500 2.500v-2h7v7h-2" strokeWidth="1" /></Svg></WindowButton>
          <WindowButton aria-label="Close"><Svg s={10} vb="0 0 10 10"><path d="M0 0l10 10M10 0L0 10" strokeWidth="1" /></Svg></WindowButton>
        </WindowControls>
      </TitleBar>
      <MenuBar>{MENUS.map((m) => <MenuItem key={m}>{m}</MenuItem>)}</MenuBar>
      <ToolbarBand>
        <Toolbar $basis="1079px">
          <Grip $space={1} />
          {MAIN.map(([n, more, icon]) => <ToolButton key={n} aria-label={n} $more={more}><Svg s={22}>{icon}</Svg></ToolButton>)}
        </Toolbar>
        <Toolbar $grow>
          <Grip $space={2} />
          {CPLANE.map((t, i) => t
            ? <ToolButton key={t[0]} aria-label={t[0]}><Svg s={22}>{t[1]}</Svg></ToolButton>
            : <ToolDivider key={i} />)}
        </Toolbar>
      </ToolbarBand>
      <CommandArea>
        <Grip $space={1} />
        <CommandColumn>
          <History>{'Loading Rhino Render, version 1.50, Jun 24 2020, 05:23:56\nSuccessfully read file "D:\\HARİCİ DİSK\\GRAFİK TASARIM\\RHİNO DOSYASI\\rhino kuyum çizimlerim\\birsel 1.3dm"'}</History>
          <CommandLine>Command:<CommandInput /></CommandLine>
        </CommandColumn>
        <ScrollColumn>
          <Spin aria-label="Scroll up"><Svg w={6} h={4} vb="0 0 6 4"><path d="M3 0l3 4H0z" fill="#222" stroke="none" /></Svg></Spin>
          <Spin aria-label="Scroll down"><Svg w={6} h={4} vb="0 0 6 4"><path d="M3 4l3-4H0z" fill="#222" stroke="none" /></Svg></Spin>
        </ScrollColumn>
      </CommandArea>
      <Work>
        <SideBar>
          <SideGrip />
          <SideGrid>
            {SIDE.map(([n, more, icon]) => <ToolButton key={n} aria-label={n} $more={more}><Svg s={22}>{icon}</Svg></ToolButton>)}
          </SideGrid>
        </SideBar>
        <ViewColumn>
          <Viewport>
            <Scene />
            <ViewTitle>Perspective<ViewCaret><Svg w={7} h={4} vb="0 0 7 4"><path d="M0 0h7L3.500 4z" fill="#000" stroke="none" /></Svg></ViewCaret></ViewTitle>
          </Viewport>
          <ViewTabs>
            {["Top", "Perspective", "Front", "Right"].map((t) => <ViewTab key={t} $on={t === "Perspective"}>{t}</ViewTab>)}
            <ViewTab $on aria-label="Add view"><Svg w={10} h={10} vb="0 0 10 10"><path d="M4 1h2v3h3v2H6v3H4V6H1V4h3z" strokeWidth=".8" stroke="#555" /></Svg></ViewTab>
          </ViewTabs>
        </ViewColumn>
        <Panel>
          <PanelGrip />
          <PanelTabs>
            {PANEL_TABS.map(([t, icon], i) => <PanelTab key={t} $on={i === 0}><Svg s={16}>{icon}</Svg>{t}</PanelTab>)}
            <PanelGear aria-label="Panel options"><Svg s={14}>{gear("#b5b5b8", "#b5b5b8")}</Svg></PanelGear>
          </PanelTabs>
          <PanelBody>
            <PageButtons>
              <PageButton $on aria-label="Camera"><Svg s={20}><path d="M2 6h5l2-3h7l2 3h4v14H2z" fill="#3a3f42" strokeWidth=".8" /><circle cx="13" cy="13" r="6" fill="#777" /><circle cx="13" cy="13" r="3" fill="#222" /></Svg></PageButton>
              <PageButton aria-label="Viewport"><Svg s={24}><path d="M1 1h22v22H1z" fill="#8ccbe8" stroke="#777" strokeWidth="2.500" /><path d="M5 6h14v12H5z" fill="#fff" stroke="#e03020" strokeWidth="1.400" /></Svg></PageButton>
              <PageButton aria-label="Objects"><Svg s={22}>{ball(19, 5, 3.5)}{ball(14, 9, 4.5)}{ball(7, 16, 6)}</Svg></PageButton>
            </PageButtons>
            {GROUPS.map(([g, rows]) => (
              <Group key={g}>
                <GroupTitle>{g}</GroupTitle>
                {rows.map(([label, value, kind]) => {
                  const id = (g + label).replace(/ /g, "");
                  return (
                    <Row key={label} $off={kind === "off"}>
                      <RowLabel htmlFor={id}>{label}</RowLabel>
                      <RowValue $shade={kind === "off" || kind === "shade"}><Value id={id} kind={kind} value={value} /></RowValue>
                    </Row>
                  );
                })}
              </Group>
            ))}
          </PanelBody>
        </Panel>
      </Work>
      <SnapBar>
        <Grip $space={3} />
        {SNAPS.map(([t, on, w, soft]) => <SnapItem key={t} $w={w}><Check type="checkbox" defaultChecked={!!on} $soft={soft} />{t}</SnapItem>)}
      </SnapBar>
      <StatusBar>
        {STATUS.map(([t, w, k]) => (
          <StatusCell key={t} $w={w} $on={k === "on"} $left={k === "layer"}>{k === "layer" && <Swatch />}{t}</StatusCell>
        ))}
        <StatusCell $fill $left>Available physical memory: 7838 MB</StatusCell>
      </StatusBar>
      <Taskbar>
        <Weather>
          <Svg w={30} h={30} vb="0 0 30 30">
            <path d="M7 19a5 5 0 010-9 8 8 0 0115 1 4 4 0 010 8z" fill="#a9c8f4" stroke="none" />
            <path d="M10 15q7 11 0 12-7-1 0-12zM20 15q7 11 0 12-7-1 0-12z" fill="#1976e8" stroke="none" />
            <circle cx="21" cy="8" r="8" fill="#c42b1c" stroke="none" /><text x="18" y="12" fontSize="11" fill="#fff" stroke="none">5</text>
          </Svg>
          <span>21°C<small>Yağmur</small></span>
        </Weather>
        <TaskCenter>
          <TaskButton aria-label="Start"><Svg s={24}><path d="M0 0h11.500v11.500H0zM12.500 0H24v11.500H12.500zM0 12.500h11.500V24H0zM12.500 12.500H24V24H12.500z" fill="url(#gWin)" stroke="none" /></Svg></TaskButton>
          <Search>
            <Svg s={16}><circle cx="10" cy="10" r="8" strokeWidth="2" /><path d="M16 16l7 7" strokeWidth="2" /></Svg>
            <input placeholder="Ara" aria-label="Ara" />
            <Svg w={48} h={26} vb="0 0 48 26">
              <path d="M11 6q6-7 12 0zM25 6q8-7 14 0z" fill="#bcd9f2" stroke="none" />
              <path d="M2 25q-1-8 8-10 14-7 28-1 10 2 9 9l-5 3H6z" fill="#7ea650" stroke="none" />
              <path d="M17 26q8-6 5-11 7 3 11 11z" fill="#f2d59b" stroke="none" />
              <path d="M7 9v10M43 9v8" stroke="#7a4a22" />
              <path d="M0 10q0-4 4-5 5-2 7 2 3 3-1 5-8 2-10-2z" fill="#e0662a" stroke="none" />
              <path d="M39 4l3 2 3-3 1 4-4 4z" fill="#e8708a" stroke="none" />
              <path d="M12 19l3-10 3 10zM34 18l4-11 4 11z" fill="#2f7a4a" stroke="none" />
              <path d="M18 15q3-8 7 0zM27 14q3-8 7 0z" fill="#5a9a58" stroke="none" />
              <path d="M4 23h12M29 23h16" stroke="#e2483a" strokeWidth="3" strokeDasharray="2 3" />
              <path d="M4 19h12M31 19h14" stroke="#f5b833" strokeWidth="2" strokeDasharray="2 3" />
            </Svg>
          </Search>
          {TASKS.map(([n, st, icon]) => <TaskButton key={n} aria-label={n} $state={st}>{icon}</TaskButton>)}
        </TaskCenter>
        <Tray>
          <TrayItem $w={38} aria-label="Hidden icons"><Svg w={11} h={7} vb="0 0 11 7"><path d="M.5 6l5-5 5 5" /></Svg></TrayItem>
          <TrayItem $w={40}>TUR<br />TRF</TrayItem>
          <TrayItem $w={7} as="span" />
          <TrayItem $w={24} aria-label="Wi-Fi"><Svg s={17}><path d="M1 9q11-10 22 0M4.500 12.500q7.500-7 15 0M8 16q4-4 8 0" strokeWidth="1.600" /><circle cx="12" cy="19" r="2" fill="#111" stroke="none" /></Svg></TrayItem>
          <TrayItem $w={24} aria-label="Volume"><Svg s={17}><path d="M1 9h4l5-5v16l-5-5H1zM14 8q3 4 0 8M17 6q5 6 0 12M20 3q7 9 0 18" strokeWidth="1.600" /></Svg></TrayItem>
          <TrayItem $w={24} aria-label="Battery"><Svg s={17}><rect x="3" y="7" width="17" height="13" rx="3" fill="#111" /><path d="M22 11v5" strokeWidth="2.500" /><path d="M5 1L1 9h4l-1 5 5-8H5z" fill="#111" stroke="#eaeff2" /></Svg></TrayItem>
          <TrayItem $w={71} $end>17:54<br />25.05.2025</TrayItem>
        </Tray>
      </Taskbar>
    </Window>
  );
}
